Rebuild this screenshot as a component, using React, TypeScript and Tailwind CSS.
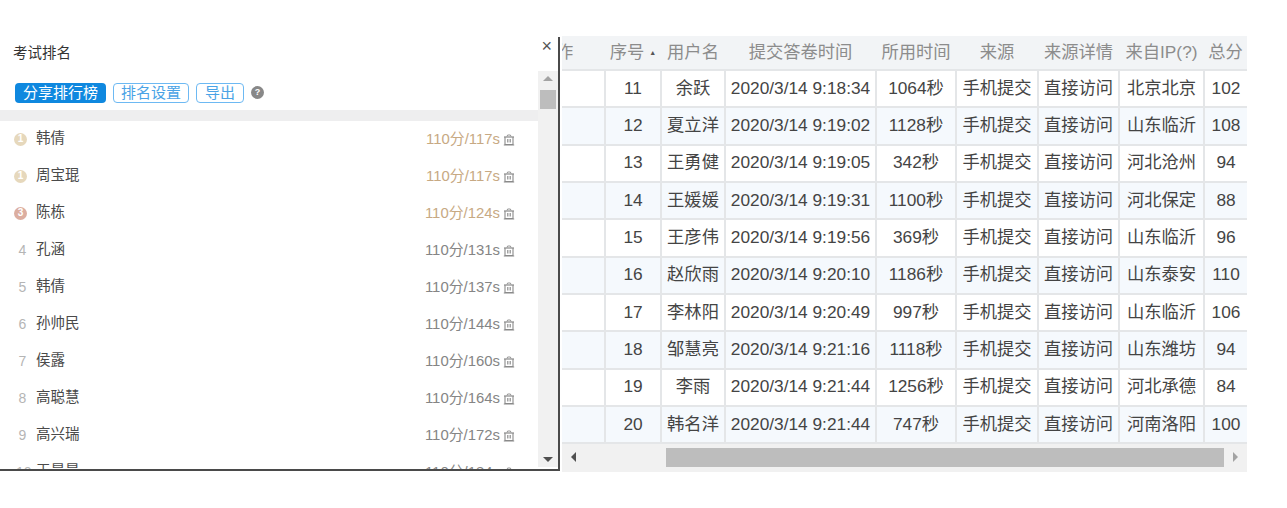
const ranks = [
  { name: "韩倩", score: "110分/117s" },
  { name: "周宝琨", score: "110分/117s" },
  { name: "陈栋", score: "110分/124s" },
  { name: "孔涵", score: "110分/131s" },
  { name: "韩倩", score: "110分/137s" },
  { name: "孙帅民", score: "110分/144s" },
  { name: "侯露", score: "110分/160s" },
  { name: "高聪慧", score: "110分/164s" },
  { name: "高兴瑞", score: "110分/172s" },
  { name: "王晨晨", score: "110分/184s" },
];

const rows = [
  ["11", "余跃", "2020/3/14 9:18:34", "1064秒", "北京北京", "102"],
  ["12", "夏立洋", "2020/3/14 9:19:02", "1128秒", "山东临沂", "108"],
  ["13", "王勇健", "2020/3/14 9:19:05", "342秒", "河北沧州", "94"],
  ["14", "王媛媛", "2020/3/14 9:19:31", "1100秒", "河北保定", "88"],
  ["15", "王彦伟", "2020/3/14 9:19:56", "369秒", "山东临沂", "96"],
  ["16", "赵欣雨", "2020/3/14 9:20:10", "1186秒", "山东泰安", "110"],
  ["17", "李林阳", "2020/3/14 9:20:49", "997秒", "山东临沂", "106"],
  ["18", "邹慧亮", "2020/3/14 9:21:16", "1118秒", "山东潍坊", "94"],
  ["19", "李雨", "2020/3/14 9:21:44", "1256秒", "河北承德", "84"],
  ["20", "韩名洋", "2020/3/14 9:21:44", "747秒", "河南洛阳", "100"],
];

const font = "font-['Liberation_Sans','Noto_Sans_CJK_SC',sans-serif]";

function CertIcon() {
  return (
    <svg viewBox="0 0 12 12" className="h-[12px] w-[12px] shrink-0" fill="none" stroke="#8a8a8a">
      <path d="M4 2.5 L4.6 1 H7.4 L8 2.5" strokeWidth="0.9" />
      <path d="M1 3 H11" strokeWidth="1.2" />
      <path d="M2 3 V10.5 H10 V3" strokeWidth="1.1" />
      <path d="M4.5 5 V8.5 M6 5 V8.5 M7.5 5 V8.5" strokeWidth="0.8" />
      <path d="M0.8 11 H11.2" strokeWidth="1" />
    </svg>
  );
}

function RankMark({ index }: { index: number }) {
  if (index < 3) {
    return (
      <span
        className={`flex h-[13px] w-[13px] items-center justify-center rounded-full text-[10px] font-bold leading-none text-white ${
          index === 2 ? "bg-[#dcaea0]" : "bg-[#e6d8bc]"
        }`}
      >
        {index === 2 ? 3 : 1}
      </span>
    );
  }
  return <span className="ml-[2px] w-[13px] text-center text-[14px] leading-none text-[#b5b5b5]">{index + 1}</span>;
}

function Toolbar() {
  return (
    <div className="flex h-[39px] items-start gap-[7px] pl-[15px] pt-[12px]">
      <button className="h-[20px] w-[91px] rounded-[4px] bg-[#0f88df] text-[15px] leading-[20px] text-white">
        分享排行榜
      </button>
      <button className="h-[20px] w-[76px] rounded-[4px] border border-[#6db9f3] text-[15px] leading-[18px] text-[#4aa3e6]">
        排名设置
      </button>
      <button className="h-[20px] w-[48px] rounded-[4px] border border-[#6db9f3] text-[15px] leading-[18px] text-[#4aa3e6]">
        导出
      </button>
      <span className="mt-[3px] flex h-[13px] w-[13px] items-center justify-center rounded-full bg-[#888888] text-[9px] font-bold leading-none text-white">
        ?
      </span>
    </div>
  );
}

function RankList() {
  return (
    <div className="min-h-0 flex-1 overflow-hidden">
      {ranks.map((r, i) => (
        <div key={i} className="flex h-[37px] items-center pb-[1px] pl-[14px] pr-[23px]">
          <RankMark index={i} />
          <span className={`flex-1 text-[14.5px] text-[#4a4a4a] ${i < 3 ? "ml-[9px]" : "ml-[7px]"}`}>{r.name}</span>
          <span className={`text-[14.9px] ${i < 3 ? "text-[#c7a983]" : "text-[#858585]"}`}>{r.score}</span>
          <span className="ml-[3px] mt-[2px]">
            <CertIcon />
          </span>
        </div>
      ))}
    </div>
  );
}

function VScrollbar() {
  return (
    <div className="mb-[2px] flex w-[20px] shrink-0 flex-col items-center bg-[#f1f1f1]">
      <div className="mt-[5px] h-0 w-0 border-x-[5px] border-b-[5px] border-x-transparent border-b-[#a3a3a3]" />
      <div className="mt-[9px] h-[19px] w-[16px] bg-[#bdbdbd]" />
      <div className="mt-auto mb-[5px] h-0 w-0 border-x-[5px] border-t-[5px] border-x-transparent border-t-[#505050]" />
    </div>
  );
}

function RankPanel() {
  return (
    <section className="mt-[1px] flex h-[434px] w-[560px] shrink-0 flex-col border-b-[2px] border-r-[2px] border-[#4a4a4a] bg-white">
      <header className="flex h-[34px] shrink-0 justify-between pl-[13px] pr-[6px]">
        <h2 className="self-center text-[14.5px] font-normal text-[#333333]">考试排名</h2>
        <span className="text-[18px] leading-[18px] text-[#555555]">×</span>
      </header>
      <div className="flex min-h-0 flex-1">
        <div className="flex min-w-0 flex-1 flex-col">
          <Toolbar />
          <div className="h-[11px] shrink-0 bg-[#eeeeef]" />
          <RankList />
        </div>
        <VScrollbar />
      </div>
    </section>
  );
}

function ResultTable() {
  const head = "border-b-[2px] border-[#e4e6e8] bg-[#f2f4f6] font-normal text-[#8c8c8c]";
  const cell = "border-b-[2px] border-l-[2px] border-[#e4e6e8] p-0 text-center";
  return (
    <section className="ml-[2px] flex w-[685px] shrink-0 flex-col">
      <table className="w-full table-fixed border-collapse text-[17.3px] text-[#444444]">
        <colgroup>
          <col className="w-[43px]" />
          <col className="w-[56px]" />
          <col className="w-[64px]" />
          <col className="w-[151px]" />
          <col className="w-[80px]" />
          <col className="w-[82px]" />
          <col className="w-[81px]" />
          <col className="w-[85px]" />
          <col className="w-[43px]" />
        </colgroup>
        <thead>
          <tr className="h-[34px]">
            <th className={`${head} overflow-hidden text-left`}>
              <span className="-ml-[6px] block">作</span>
            </th>
            <th className={head}>
              序号<span className="ml-[5px] align-middle text-[7px] text-[#555555]">▲</span>
            </th>
            <th className={head}>用户名</th>
            <th className={head}>提交答卷时间</th>
            <th className={head}>所用时间</th>
            <th className={head}>来源</th>
            <th className={head}>来源详情</th>
            <th className={head}>来自IP(?)</th>
            <th className={head}>总分</th>
          </tr>
        </thead>
        <tbody>
          {rows.map((r, i) => (
            <tr key={r[0]} className={`h-[37.33px] ${i % 2 === 1 ? "bg-[#f5f9fd]" : "bg-white"}`}>
              <td className="border-b-[2px] border-[#e4e6e8] p-0" />
              <td className={cell}>{r[0]}</td>
              <td className={cell}>{r[1]}</td>
              <td className={cell}>{r[2]}</td>
              <td className={cell}>{r[3]}</td>
              <td className={cell}>手机提交</td>
              <td className={cell}>直接访问</td>
              <td className={cell}>{r[4]}</td>
              <td className={cell}>{r[5]}</td>
            </tr>
          ))}
        </tbody>
      </table>
      <div className="flex h-[28px] items-center bg-[#f1f1f1] pb-[2px]">
        <div className="ml-[9px] h-0 w-0 border-y-[5px] border-r-[5px] border-y-transparent border-r-[#505050]" />
        <div className="ml-[90px] h-[19px] w-[558px] bg-[#bdbdbd]" />
        <div className="ml-[9px] h-0 w-0 border-y-[5px] border-l-[5px] border-y-transparent border-l-[#a3a3a3]" />
      </div>
    </section>
  );
}

export default function App() {
  return (
    <div className={`flex h-[508px] w-[1287px] items-start bg-white pt-[36px] ${font}`}>
      <RankPanel />
      <ResultTable />
    </div>
  );
}
